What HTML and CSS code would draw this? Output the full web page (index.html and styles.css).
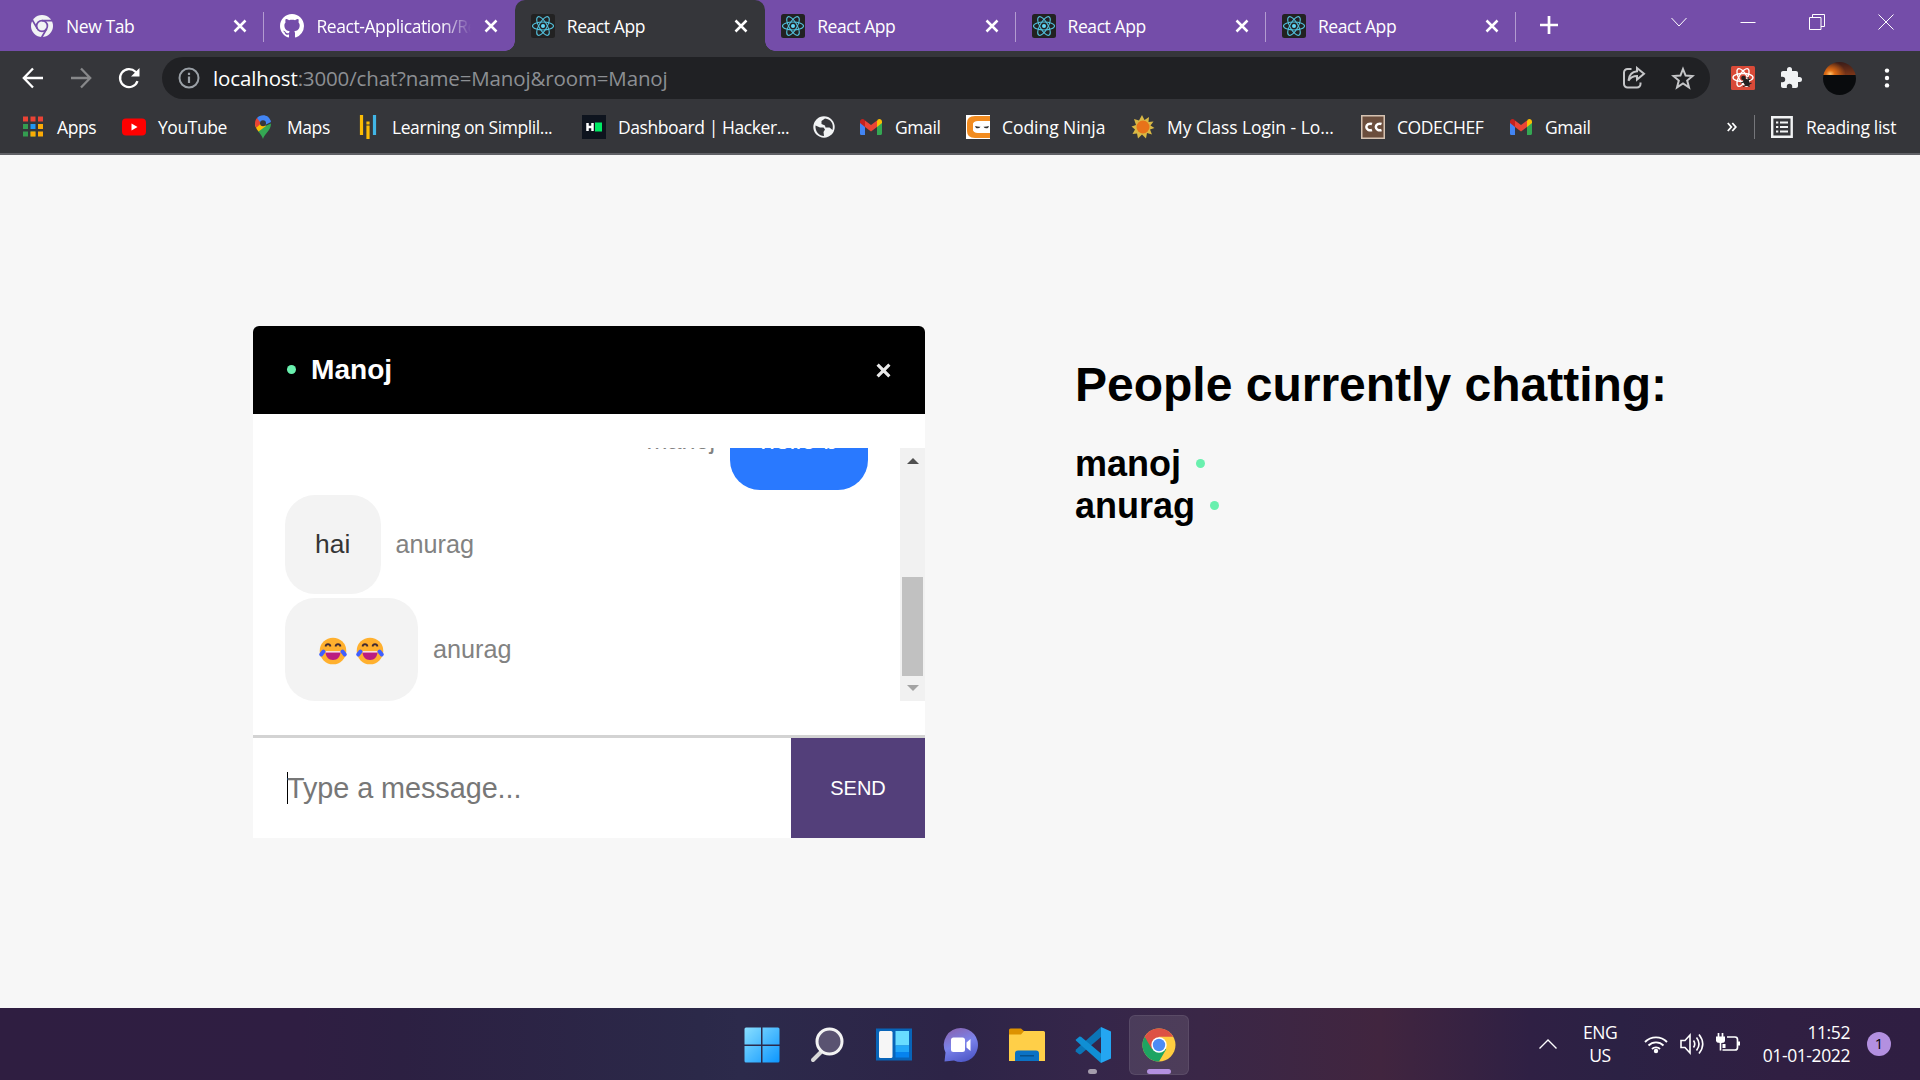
FILE: index.html
```html
<!DOCTYPE html>
<html lang="en">
<head>
<meta charset="utf-8">
<title>React App</title>
<link rel="stylesheet" href="styles.css">
</head>
<body>
<svg class="defs" width="0" height="0">
  <symbol id="close" viewBox="0 0 14 14"><path d="M1.500 1.500l11 11M12.500 1.500l-11 11" fill="none" stroke="#fff" stroke-width="2.500"/></symbol>
  <symbol id="react" viewBox="0 0 24 24"><rect width="24" height="24" rx="2.500" fill="#222"/><g fill="none" stroke="#53c1dd" stroke-width="1.100"><ellipse cx="12" cy="12" rx="10.500" ry="4"/><ellipse cx="12" cy="12" rx="10.500" ry="4" transform="rotate(60 12 12)"/><ellipse cx="12" cy="12" rx="10.500" ry="4" transform="rotate(120 12 12)"/></g><circle cx="12" cy="12" r="2" fill="#61dafb"/></symbol>
  <symbol id="gmail" viewBox="0 0 24 24"><path d="M1 7v11.500C1 19.500 1.700 20 2.500 20H6V9z" fill="#4285f4"/><path d="M18 20h3.500c.8 0 1.500-.6 1.500-1.500V7l-5 3z" fill="#34a853"/><path d="M18 6v6l5-4V6.500c0-2.400-2.700-3.200-4.200-2z" fill="#fbbc04"/><path d="M6 12V5.500l6 4.500 6-4.500V12l-6 4.500z" fill="#ea4335"/><path d="M1 6.500V8l5 4V6L5.200 4.500C3.700 3.300 1 4.100 1 6.500z" fill="#c5221f"/></symbol>
</svg>

<div class="screen">
  <header class="browser">
    <div class="tabs">
      <div class="tab">
        <svg class="icon" viewBox="0 0 24 24"><circle cx="12" cy="12" r="11" fill="#f1f3f4"/><g fill="none" stroke="#744da9" stroke-width="1.700"><circle cx="12" cy="12" r="5.400"/><path d="M12 6.600h10M7.300 14.700L2.300 6M16.700 14.700l-5 8.600"/></g></svg>
        <span class="tab-title">New Tab</span><svg class="x"><use href="#close"/></svg>
      </div>
      <div class="tab ruled">
        <svg class="icon" viewBox="0 0 16 16"><path fill="#fff" d="M8 0C3.580 0 0 3.580 0 8c0 3.540 2.290 6.530 5.470 7.590.4.070.55-.17.55-.38 0-.19-.01-.82-.01-1.490-2.010.37-2.530-.49-2.690-.94-.09-.23-.48-.94-.82-1.130-.28-.15-.68-.52-.01-.53.63-.01 1.080.58 1.230.82.72 1.210 1.870.87 2.330.66.070-.52.28-.87.51-1.070-1.780-.2-3.640-.89-3.640-3.950 0-.87.31-1.590.82-2.150-.08-.2-.36-1.020.08-2.120 0 0 .67-.21 2.200.82.64-.18 1.320-.27 2-.27s1.360.09 2 .27c1.530-1.040 2.200-.82 2.200-.82.44 1.100.16 1.920.08 2.120.51.56.82 1.270.82 2.150 0 3.070-1.870 3.750-3.650 3.950.29.25.54.73.54 1.480 0 1.070-.01 1.930-.01 2.200 0 .21.15.46.55.38A8.010 8.010 0 0 0 16 8c0-4.420-3.580-8-8-8z"/></svg>
        <span class="tab-title faded">React-Application/Re</span><svg class="x"><use href="#close"/></svg>
      </div>
      <div class="tab active"><svg class="icon"><use href="#react"/></svg><span class="tab-title">React App</span><svg class="x"><use href="#close"/></svg></div>
      <div class="tab"><svg class="icon"><use href="#react"/></svg><span class="tab-title">React App</span><svg class="x"><use href="#close"/></svg></div>
      <div class="tab ruled"><svg class="icon"><use href="#react"/></svg><span class="tab-title">React App</span><svg class="x"><use href="#close"/></svg></div>
      <div class="tab ruled"><svg class="icon"><use href="#react"/></svg><span class="tab-title">React App</span><svg class="x"><use href="#close"/></svg></div>
      <div class="new-tab ruled"><svg width="18" height="18" viewBox="0 0 18 18"><path d="M9 0v18M0 9h18" stroke="#fff" stroke-width="2.700"/></svg></div>
      <div class="window-buttons">
        <svg viewBox="0 0 16 16"><path d="M.5 4L8 12l7.500-8"/></svg>
        <svg viewBox="0 0 16 16"><path d="M.5 8.500h15"/></svg>
        <svg viewBox="0 0 16 16"><path d="M.5 3.500h11.500v12H.5zM3.500 3.500V.5h12v12H12"/></svg>
        <svg viewBox="0 0 16 16"><path d="M.5 .5l15 15M15.500 .5l-15 15"/></svg>
      </div>
    </div>

    <div class="toolbar">
      <div class="nav">
        <svg viewBox="0 0 24 24"><path d="M22 12H3.500M12 2.500L2.800 12l9.200 9.500" stroke="#fff"/></svg>
        <svg viewBox="0 0 24 24"><path d="M2 12h18.500M12 2.500l9.200 9.500-9.200 9.500" stroke="#87888a"/></svg>
        <svg viewBox="0 0 24 24"><path d="M20.500 15.200A9 9 0 1 1 18.500 5.800L21 8.500" stroke="#fff"/><path d="M22.500 2v8.500H14z" fill="#fff"/></svg>
      </div>
      <div class="address">
        <svg class="info" viewBox="0 0 22 22"><circle cx="11" cy="11" r="9.500" fill="none" stroke="#9aa0a6" stroke-width="2"/><path d="M11 9.500V16M11 5.700v2.200" stroke="#9aa0a6" stroke-width="2.200"/></svg>
        <span class="url"><b>localhost</b>:3000/chat?name=Manoj&amp;room=Manoj</span>
        <svg class="act" viewBox="0 0 24 24"><path d="M9.500 3H5.500A3.500 3.500 0 0 0 2 6.500v11.500A3.500 3.500 0 0 0 5.500 21.500H15a3.500 3.500 0 0 0 3.500-3.500V16.500M15 2l7 5.800-7 5.800v-3.500c-4 0-6.500 1.500-8.500 4.500.5-5.500 3.500-8.800 8.500-9.300z"/></svg>
        <svg class="act" viewBox="0 0 24 24"><path d="M12 3l2.600 6.600 7 .4-5.400 4.500 1.800 6.900-6-3.900-6 3.900 1.800-6.900L2.400 10l7-.4z"/></svg>
      </div>
      <div class="extensions">
        <svg viewBox="0 0 24 24"><rect width="24" height="24" rx="1.500" fill="#d94a38"/><g fill="none" stroke="#fff" stroke-width="1.400"><ellipse cx="12" cy="11.500" rx="10" ry="4"/><ellipse cx="12" cy="11.500" rx="10" ry="4" transform="rotate(60 12 11.500)"/><ellipse cx="12" cy="11.500" rx="10" ry="4" transform="rotate(120 12 11.500)"/></g><ellipse cx="15.500" cy="16.500" rx="2.800" ry="4" transform="rotate(-35 15.500 16.500)" fill="#222"/><circle cx="12.500" cy="12" r="2.300" fill="#222"/><path d="M10 17l9.500-4M12 20.500l8.500-3.500M17 11l1 10" stroke="#222" stroke-width="1.200"/></svg>
        <svg viewBox="0 0 24 24"><path fill="#f1f3f4" d="M20.500 11H19V7c0-1.100-.9-2-2-2h-4V3.500a2.500 2.500 0 0 0-5 0V5H4c-1.100 0-2 .9-2 2v3.800h1.500a2.700 2.700 0 0 1 0 5.400H2V20c0 1.100.9 2 2 2h3.800v-1.500a2.700 2.700 0 0 1 5.400 0V22H17c1.100 0 2-.9 2-2v-4h1.500a2.500 2.500 0 0 0 0-5z"/></svg>
        <span class="avatar"></span>
        <svg viewBox="0 0 24 24" fill="#fff"><circle cx="12" cy="4.600" r="2.200"/><circle cx="12" cy="12" r="2.200"/><circle cx="12" cy="19.400" r="2.200"/></svg>
      </div>
    </div>

    <div class="bookmarks">
      <div class="mark"><svg class="icon" viewBox="0 0 24 24"><path d="M2 1.500h5v5H2zM9.500 1.500h5v5h-5zM17 1.500h5v5h-5z" fill="#ea4335"/><path d="M2 9h5v5H2zM2 16.500h5v5H2zM9.500 16.500h5v5h-5z" fill="#34a853" fill-opacity=".9"/><path d="M9.500 9h5v5h-5z" fill="#2196f3"/><path d="M17 9h5v5h-5zM17 16.500h5v5h-5zM9.500 16.500h5v5h-5z" fill="#fbaa05"/></svg>Apps</div>
      <div class="mark"><svg class="icon" viewBox="0 0 24 24"><rect x="0" y="3.500" width="24" height="17" rx="4" fill="#f00"/><path d="M9.500 8.500l6 3.500-6 3.500z" fill="#fff"/></svg>YouTube</div>
      <div class="mark"><svg class="icon" viewBox="0 0 24 24"><path d="M12 24c1.200-5 8-8.500 8-15.500L12 12 7 16c3 3.500 4.200 5.500 5 8z" fill="#34a853"/><path d="M7.500 16.500C5.500 14 4 11.800 4 8.500L9 5l6 6z" fill="#fbbc04"/><path d="M4 8.500c0-2.300.8-4 2-5.400l5 4.400-5.700 5.200C4.500 11.500 4 10 4 8.500z" fill="#ea4335"/><path d="M6 3.100C9.500-1 18-1.200 20 7l-8 4z" fill="#4285f4"/><circle cx="12" cy="8.300" r="3" fill="#35363a"/></svg>Maps</div>
      <div class="mark"><svg class="icon" viewBox="0 0 24 24"><path d="M5.500 0v20M12 10.500V24M12 6.500v3" stroke="#fbbc04" stroke-width="3.200"/><path d="M18.500 0v20" stroke="#41b6e6" stroke-width="3.200"/></svg>Learning on Simplil...</div>
      <div class="mark"><svg class="icon" viewBox="0 0 24 24"><path d="M0 0h24v24H0z" fill="#0e141e"/><path d="M5.500 8v8M10.500 8v8M5 12h6" stroke="#fff" stroke-width="2.500"/><path d="M13 7.500h7v9h-7z" fill="#00ea64"/></svg>Dashboard | Hacker...</div>
      <div class="mark"><svg class="icon" viewBox="0 0 24 24"><circle cx="12" cy="12" r="10.700" fill="#f1f3f4"/><path d="M3.500 10.500l4.500 2h3.500l1.500 2-1.500 2.500.5 4c-5 0-9-4.500-8.500-10.500zM13 3.500L9.500 6v3l3.500 1.500.5 2h4l3 2.500c1.500-6-1.500-11-7.500-11.500z" fill="#35363a"/></svg></div>
      <div class="mark"><svg class="icon"><use href="#gmail"/></svg>Gmail</div>
      <div class="mark spaced"><svg class="icon" viewBox="0 0 24 24"><path d="M0 0h24v24H0z" fill="#fff"/><path d="M24 1H9Q1 1 1 8v8q0 7 8 7h15v-5H12q-5 0-5-4v-4q0-4 5-4h12z" fill="#f28c20"/><path d="M7 9.500Q7 7 10 7h14v10H10q-3 0-3-3z" fill="#fff"/><path d="M9 11q3 1 5.500 .8Q13 14 10 13zM23 11q-3 1-5.500 .8Q19 14 22 13z" fill="#333"/></svg>Coding Ninja</div>
      <div class="mark spaced"><svg class="icon" viewBox="0 0 24 24"><path d="M11 0l2.500 5 4.500-3-.5 5 5-.5-3 4 4 2.500-4.500 1.500 2 5-5-1.500-1 5.500-4-4-4 4-1-5-4.500.5 2.500-4.500-3.500-3 4.500-1.500L3 4l5 1.500z" fill="#d9b844"/><circle cx="12" cy="12" r="6.500" fill="#e8731a"/></svg>My Class Login - Lo...</div>
      <div class="mark"><svg class="icon" viewBox="0 0 24 24"><path d="M.75.75h22.500v22.500H.75z" fill="#6b4e3d" stroke="#d5c2b1" stroke-width="1.500"/><path d="M11 9a4 3.300 0 1 0 0 6M20.500 9a4 3.300 0 1 0 0 6" fill="none" stroke="#fff" stroke-width="2.500"/></svg>CODECHEF</div>
      <div class="mark"><svg class="icon"><use href="#gmail"/></svg>Gmail</div>
      <svg class="more" viewBox="0 0 10 10"><path d="M.8 1l3.500 4L.8 9M5.300 1l3.500 4-3.500 4" fill="none" stroke="#fff" stroke-width="1.800"/></svg>
      <div class="mark reading"><svg class="icon" viewBox="0 0 24 24"><path d="M2.200 2.200h19.500v19.500H2.200z" fill="none" stroke="#f1f3f4" stroke-width="2.400"/><path d="M6 7.500h2.300M10 7.500h8M6 12h2.300M10 12h8M6 16.500h2.300M10 16.500h8" stroke="#f1f3f4" stroke-width="2"/></svg>Reading list</div>
    </div>
  </header>

  <main class="page">
    <section class="chat">
      <div class="chat-head"><i class="dot"></i><h3>Manoj</h3><svg class="leave" viewBox="0 0 14 14"><path d="M1.500 1.500l11 11M12.500 1.500l-11 11" stroke="#e8e8e8" stroke-width="3"/></svg></div>
      <div class="chat-body">
        <div class="messages">
          <div class="message mine"><span class="sender">manoj</span><p class="bubble">hello b</p></div>
          <div class="message"><p class="bubble">hai</p><span class="sender">anurag</span></div>
          <div class="message tall"><p class="bubble emoji">
            <svg viewBox="0 0 30 28"><circle cx="15" cy="14" r="13.300" fill="#ffb02e"/><path d="M7.500 14.500h15c0 5-3 8.500-7.500 8.500s-7.500-3.500-7.500-8.500z" fill="#bb1d80"/><path d="M7.500 14.200h15v1.300h-15z" fill="#fff"/><path d="M7.500 9.500c.5-3 4.500-3 5 0M17.500 9.500c.5-3 4.500-3 5 0" fill="none" stroke="#402a32" stroke-width="1.800"/><path d="M5.500 14.500l-2.300 3M24.500 14.500l2.300 3" stroke="#3f5fff" stroke-width="4" stroke-linecap="round"/></svg>
            <svg viewBox="0 0 30 28"><circle cx="15" cy="14" r="13.300" fill="#ffb02e"/><path d="M7.500 14.500h15c0 5-3 8.500-7.500 8.500s-7.500-3.500-7.500-8.500z" fill="#bb1d80"/><path d="M7.500 14.200h15v1.300h-15z" fill="#fff"/><path d="M7.500 9.500c.5-3 4.500-3 5 0M17.500 9.500c.5-3 4.500-3 5 0" fill="none" stroke="#402a32" stroke-width="1.800"/><path d="M5.500 14.500l-2.300 3M24.500 14.500l2.300 3" stroke="#3f5fff" stroke-width="4" stroke-linecap="round"/></svg>
          </p><span class="sender">anurag</span></div>
        </div>
        <div class="scrollbar"><i class="up"></i><i class="thumb"></i><i class="down"></i></div>
      </div>
      <div class="composer"><div class="input"><i class="caret"></i>Type a message...</div><div class="send">SEND</div></div>
    </section>
    <aside class="people">
      <h1>People currently chatting:</h1>
      <h2>manoj<i class="dot"></i></h2>
      <h2>anurag<i class="dot"></i></h2>
    </aside>
  </main>

  <footer class="taskbar">
    <div class="apps">
      <div class="app"><svg viewBox="0 0 36 36"><defs><linearGradient id="win" gradientUnits="userSpaceOnUse" x1="0" y1="0" x2="36" y2="36"><stop offset="0" stop-color="#8be0ff"/><stop offset="1" stop-color="#0a95ff"/></linearGradient></defs><path fill="url(#win)" d="M2 .5h15v17H.5V2Q.5.500 2 .5zM18.500.5H34q1.500 0 1.500 1.500v15.500h-17zM.5 19H17v16.500H2Q.5 35.500.5 34zM18.500 19h17v15q0 1.500-1.500 1.500H18.500z"/></svg></div>
      <div class="app"><svg viewBox="0 0 36 36"><path d="M12 24L3 33" stroke="#d8d8d8" stroke-width="4" stroke-linecap="round"/><circle cx="19.500" cy="14.500" r="12.500" fill="#5a5371" stroke="#f3f3f3" stroke-width="3"/></svg></div>
      <div class="app"><svg viewBox="0 0 36 36"><path d="M0 1.500h36v32H0z" fill="#0864b8"/><rect x="3" y="4" width="13.500" height="27" rx="1.500" fill="#f6f6f6"/><path d="M19.500 4H33v14.500H19.500z" fill="#69dcff"/><path d="M19.500 18.500H33v6.500H19.500z" fill="#22a7f8"/><path d="M19.500 25H33v5.500H19.500z" fill="#0683ee"/></svg></div>
      <div class="app"><svg viewBox="0 0 36 36"><defs><linearGradient id="teams" x1=".2" y1="0" x2=".6" y2="1"><stop offset="0" stop-color="#8863b0"/><stop offset=".5" stop-color="#7b83eb"/><stop offset="1" stop-color="#5059c9"/></linearGradient></defs><path d="M18 1a17 17 0 1 1-7 32.500L1.500 34.500l1-9A17 17 0 0 1 18 1z" fill="url(#teams)"/><rect x="8" y="10.500" width="14" height="14.500" rx="2.500" fill="#fff"/><path d="M23.500 15.500l4-3.500v12l-4-3.500z" fill="#fff"/></svg></div>
      <div class="app"><svg viewBox="0 0 36 36"><path d="M0 3q0-1.500 1.500-1.500H12L16 5v6H0z" fill="#dd9200"/><path d="M0 7.500h12L15 4h19.500Q36 4 36 5.500V34H0z" fill="#ffcf48"/><path d="M6 34V26.500Q6 23.500 9 23.500h18q3 0 3 3V34z" fill="#0b72c4"/><path d="M11 28.800h14" stroke="#064c82" stroke-width="1.300"/></svg></div>
      <div class="app"><svg viewBox="0 0 36 36"><path d="M1 22.500L26 0v10L6 27 4.500 27.500.5 24.500z" fill="#0b75b7"/><path d="M1 12.500L4.500 9.500 6 9.800l20 16.700V36L.8 13.500z" fill="#108fd4"/><path d="M26 0l10 4.500v27L26 36z" fill="#24a6f2"/></svg><i class="run"></i></div>
      <div class="app open"><svg viewBox="0 0 36 36"><circle cx="18" cy="18" r="16.500" fill="#ffcd40"/><path d="M3.700 9.700A16.500 16.500 0 0 0 18 34.500l7.200-12.300L18 18z" fill="#1da462"/><path d="M3.700 9.700A16.500 16.500 0 0 1 32.300 9.700H18L10.800 22z" fill="#dd5144"/><circle cx="18" cy="18" r="7.700" fill="#fff"/><circle cx="18" cy="18" r="6.200" fill="#4c8bf5"/></svg><i class="run wide"></i></div>
    </div>
    <div class="tray">
      <svg class="chev" viewBox="0 0 20 12"><path d="M1.500 10.500L10 2l8.500 8.500" fill="none" stroke="#fff" stroke-width="1.400"/></svg>
      <div class="lang">ENG<br>US</div>
      <svg class="tr" viewBox="0 0 24 24"><g fill="none" stroke="#fff" stroke-width="1.900"><path d="M1 10a15.500 15.500 0 0 1 22 0M4.500 13.500a10.600 10.600 0 0 1 15 0M8 17a5.700 5.700 0 0 1 8 0"/></g><circle cx="12" cy="19" r="2.200" fill="#fff"/></svg>
      <svg class="tr" viewBox="0 0 24 24"><path d="M1 8.500h4l5-5.500v18l-5-5.500H1zM13.500 8.500q2.500 3.500 0 7M16.500 5.500q5 6.500 0 13M19 2.500q7.500 9.500 0 19" fill="none" stroke="#fff" stroke-width="1.600"/></svg>
      <svg class="tr" viewBox="0 0 24 24"><path d="M2.500 1v5M6.500 1v5" stroke="#fff" stroke-width="1.700"/><path d="M0 4.500h9v4Q9 11 5.500 11H4.500Q0 11 0 8.500z" fill="#fff"/><path d="M4.500 10v8.500" stroke="#fff" stroke-width="1.600"/><path d="M11 5h8q2.500 0 2.500 2.500v8Q21.500 18 19 18H6.500" fill="none" stroke="#fff" stroke-width="1.700"/><path d="M6.500 12h3V9.500v6.500h-3zM22 9.500h2v4h-2z" fill="#fff"/></svg>
      <div class="clock">11:52<br>01-01-2022</div>
      <span class="badge">1</span>
    </div>
  </footer>
</div>
</body>
</html>
```
FILE: styles.css
```css
* { box-sizing: border-box; }
body { margin: 0; background: #f7f7f7; font-family: "Liberation Sans", Arial, sans-serif; }
h1, h2, h3, p { margin: 0; }
svg { display: block; flex: none; }
.defs { position: absolute; }
.screen { width: 1920px; height: 1080px; display: flex; flex-direction: column; overflow: hidden; }

.browser { height: 155px; background: #35363a; border-bottom: 2px solid #606166; color: #fff; font: 17.5px "Open Sans", "Noto Sans", sans-serif; letter-spacing: -0.42px; }
.icon { width: 24px; height: 24px; }
.tabs { height: 51px; display: flex; background: #744da9; padding-left: 14px; }
.tab { width: 250.4px; flex: none; display: flex; align-items: center; padding: 0 17px 0 16px; position: relative; }
.tab .icon { margin-right: 12px; }
.tab-title { width: 155px; white-space: nowrap; overflow: hidden; }
.faded { -webkit-mask-image: linear-gradient(90deg, #000 125px, transparent 155px); mask-image: linear-gradient(90deg, #000 125px, transparent 155px); }
.x { width: 14px; height: 14px; margin-left: auto; }
.ruled::before { content: ""; position: absolute; left: -1px; top: 12px; width: 1px; height: 30px; background: #b39bd0; }
.active { background: #35363a; border-radius: 10px 10px 0 0; }
.active::before, .active::after { content: ""; position: absolute; bottom: 0; width: 10px; height: 10px; }
.active::before { left: -10px; background: radial-gradient(circle at 0 0, transparent 9.500px, #35363a 10px); }
.active::after { right: -10px; background: radial-gradient(circle at 100% 0, transparent 9.500px, #35363a 10px); }
.new-tab { padding: 16px 0 0 24px; position: relative; }
.window-buttons { display: flex; gap: 53px; margin-left: auto; padding: 14px 26px 0 0; }
.window-buttons svg { width: 16px; height: 16px; fill: none; stroke: #fff; stroke-width: 1; }

.toolbar { height: 54px; display: flex; align-items: center; }
.nav { width: 162px; flex: none; display: flex; gap: 24px; padding-left: 21px; }
.nav svg { width: 24px; height: 24px; fill: none; stroke-width: 2.300; }
.address { width: 1548px; flex: none; height: 42px; border-radius: 21px; background: #202124; display: flex; align-items: center; padding: 0 15px 0 16px; font-size: 20.500px; letter-spacing: -0.14px; color: #9aa0a6; }
.info { width: 22px; height: 22px; margin-right: 13px; }
.url { flex: 1; color: #8c8f93; }
.url b { font-weight: 400; color: #fff; }
.act { width: 24px; height: 24px; margin-left: 25px; fill: none; stroke: #c5c6c8; stroke-width: 2; }
.extensions { display: flex; align-items: center; padding-left: 21px; }
.extensions svg { width: 24px; height: 24px; margin-right: 24px; }
.extensions svg:nth-child(2) { margin-right: 20px; }
.extensions svg:last-child { margin-right: 0; }
.avatar { width: 33px; height: 33px; flex: none; border-radius: 50%; margin-right: 19px; background: linear-gradient(transparent 38%, #090b0d 40%), radial-gradient(ellipse at 22% 36%, #ffc36b 0, #e06d14 12%, transparent 42%), linear-gradient(#3a1c18 0, #7d3618 40%); }

.bookmarks { height: 48px; display: grid; align-items: center; padding: 0 0 4px 21px; grid-template-columns: 101px 129px 105px 226px 230px 47px 107px 165px 230px 148px 218px 27px 1fr; }
.mark { display: flex; align-items: center; gap: 12px; white-space: nowrap; }
.spaced { letter-spacing: -0.05px; }
.more { width: 10px; height: 10px; }
.reading { border-left: 1px solid #75767a; padding-left: 15px; letter-spacing: -0.3px; }

.page { height: 853px; padding: 171px 0 0 253px; display: flex; align-items: flex-start; }
.chat { width: 672px; height: 512px; border-radius: 6px 6px 0 0; overflow: hidden; background: #fff; display: flex; flex-direction: column; }
.chat-head { height: 88px; background: #000; color: #fff; display: flex; align-items: center; padding: 0 34px 1px; }
.dot { display: block; width: 9px; height: 9px; border-radius: 50%; background: #69f0ae; }
h3 { font-size: 28.080px; margin-left: 15px; }
.leave { width: 15px; height: 15px; margin: 1px 0 0 auto; }
.chat-body { height: 253px; margin: 34px 0; display: flex; }
.messages { width: 647px; padding: 0 32px; overflow: hidden; display: flex; flex-direction: column; justify-content: flex-end; gap: 4px; }
.message { height: 99px; flex: none; display: flex; align-items: center; color: #828282; font-size: 25.200px; }
.message.mine { justify-content: flex-end; margin-bottom: 1px; }
.message.tall { height: 103px; }
.sender { margin: 0 15px 1px; }
.mine .sender { margin-bottom: 0; }
.bubble { height: 100%; display: flex; align-items: center; padding: 0 30px 1px; border-radius: 30px; background: #f3f3f3; color: #353535; font-size: 26.400px; letter-spacing: .1px; }
.mine .bubble { background: #2979ff; color: #fff; padding-bottom: 0; letter-spacing: 0; }
.emoji svg { width: 30px; height: 28px; margin-right: 7px; }
.emoji { padding: 2px 27px 0 33px; width: 133px; }
.scrollbar { width: 25px; background: #f1f1f1; display: flex; flex-direction: column; align-items: center; padding: 10px 0; }
.up { border: 6px solid transparent; border-top: 0; border-bottom: 6px solid #505050; }
.thumb { width: 21px; height: 99px; margin: 113px 0 9px; background: #c1c1c1; }
.down { border: 6px solid transparent; border-bottom: 0; border-top: 6px solid #a3a3a3; }
.composer { height: 103px; display: flex; border-top: 3px solid #d3d3d3; }
.input { width: 538px; display: flex; align-items: center; padding-left: 34px; font-size: 28.800px; letter-spacing: -.05px; color: #777; }
.caret { width: 1px; height: 32px; margin-right: -1px; background: #000; }
.send { flex: 1; display: flex; align-items: center; justify-content: center; background: #533f7a; color: #fff; font-size: 20px; }
.people { padding: 31px 0 0 150px; }
h1 { font-size: 48px; line-height: 55px; margin-bottom: 31px; }
h2 { font-size: 36px; line-height: 42px; display: flex; align-items: center; gap: 15px; }
h2 .dot { margin-bottom: 2px; }

.taskbar { height: 72px; display: flex; background: linear-gradient(90deg, #2f1e41 0, #2f1e42 300px, #2c2042 400px, #2b2949 700px, #2c2a4b 740px, #2d2447 950px, #35264a 1090px, #3a2747 1200px, #41253f 1380px, #2f2044 1530px, #2b2144 1620px, #301f42 1780px, #2f1e42 100%); color: #fff; font: 18px/23px "Open Sans", "Noto Sans", sans-serif; }
.apps { display: flex; align-items: center; gap: 6.200px; padding: 2px 0 0 732px; }
.app { width: 60px; height: 60px; display: flex; align-items: center; justify-content: center; position: relative; border-radius: 6px; }
.app svg { width: 36px; height: 36px; }
.open { background: rgba(255,255,255,.1); border: 1px solid rgba(255,255,255,.08); }
.run { position: absolute; bottom: 1px; width: 9px; height: 5px; border-radius: 3px; background: #a59dad; }
.run.wide { width: 24px; bottom: 0; background: #b390e0; }
.tray { flex: 1; display: flex; align-items: center; justify-content: flex-end; padding-right: 29px; }
.chev { width: 20px; height: 12px; margin-right: 25px; }
.lang { width: 34px; text-align: center; font-size: 17.500px; letter-spacing: -.4px; margin-right: 27px; white-space: nowrap; display: flow-root; }
.tr { width: 24px; height: 24px; margin-right: 12px; }
.clock { width: 98px; text-align: right; font-size: 17.500px; letter-spacing: -.4px; margin: 0 17px 0 0; white-space: nowrap; }
.badge { width: 24px; height: 24px; border-radius: 50%; background: #b390e0; color: #000; text-align: center; font-size: 15px; }
```
